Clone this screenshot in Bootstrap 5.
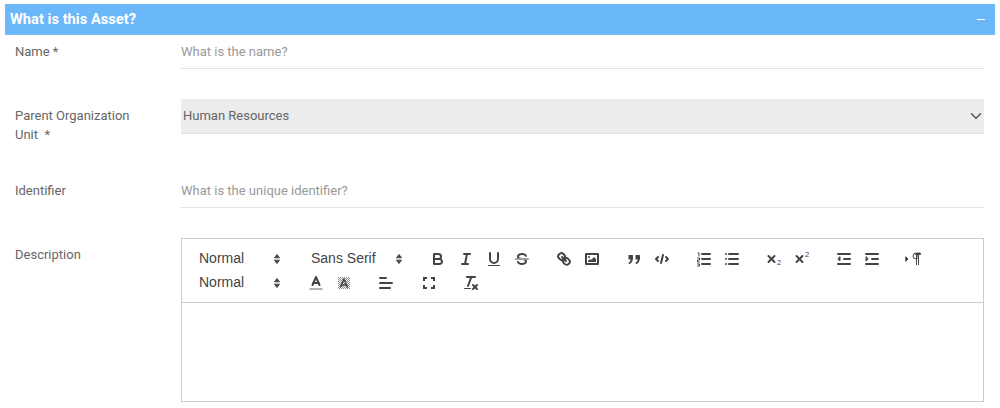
<!DOCTYPE html>
<html lang="en">
<head>
<meta charset="utf-8">
<title>What is this Asset?</title>
<link href="https://cdn.jsdelivr.net/npm/bootstrap@5.3.0/dist/css/bootstrap.min.css" rel="stylesheet">
<style>
body{font-family:Roboto,"Liberation Sans",sans-serif;font-size:13px;color:#666;background:#fff}
.asset-panel{margin:4px 5px 0}
.asset-head{height:31px;background:#6ab7fa;color:#fff;padding:0 10px 0 5px;border-bottom:1px solid #7cc0fb;font-size:14.7px;font-weight:700}
.asset-min{display:block;width:8px;height:1px;background:#fff}
.asset-body{padding:0 10px 0 10px}
.asset-row{margin-bottom:30px}
.asset-label{flex:0 0 166px;width:166px;padding:8px 30px 0 0;line-height:18.5px;font-size:13px;margin:0;color:#666}
.asset-input{border:0;border-bottom:1px solid #e3e3e3;border-radius:0;height:34px;padding:0;font-size:13px;color:#666;background:transparent;box-shadow:none;flex:0 0 803px;width:803px}
.asset-input::placeholder{color:#999;opacity:1}
.asset-select{border:0;border-bottom:1px solid #e3e3e3;border-radius:0;height:35px;padding:0 30px 0 2px;font-size:13px;color:#666;background-color:#ececec;background-position:right 0 center;background-size:16px 12px;flex:0 0 803px;width:803px;background-image:url("data:image/svg+xml,%3csvg xmlns='http://www.w3.org/2000/svg' viewBox='0 0 16 16'%3e%3cpath fill='none' stroke='%23555' stroke-linecap='round' stroke-linejoin='round' stroke-width='2' d='m2 5 6 6 6-6'/%3e%3c/svg%3e")}
.ed-box{border:1px solid #ccc;flex:0 0 803px;width:803px}
.ed-tools{border-bottom:1px solid #ccc;padding:8px;font-family:"Liberation Sans",sans-serif;font-size:14px;color:#444;height:64px}
.ed-group{display:inline-flex;margin-right:14px;height:24px;align-items:center}
.ed-pick{display:flex;align-items:center;justify-content:space-between;width:98px;height:24px;padding:0 2px 1px 9px}
.ed-pick.ed-wide{width:106px;padding:0 1px 1px 8px}
.ed-pick svg{margin-top:1px}
.ed-btn{display:flex;align-items:center;justify-content:center;width:28px;height:24px;padding:3px 5px}
.ed-btn svg,.ed-pick svg{width:18px;height:18px;flex:none}
.ed-btn svg *,.ed-pick svg *{fill:none;stroke:#444;stroke-width:2;stroke-linecap:round;stroke-linejoin:round}
.ed-btn svg .t,.ed-pick svg .t{stroke-width:1}
.ed-btn svg .f,.ed-pick svg .f{fill:#444;stroke:none}
.ed-btn svg .fs,.ed-pick svg .fs{fill:#444;stroke:#444;stroke-width:1}
.ed-btn svg text{fill:#444;stroke:none;font:7.5px "Liberation Sans",sans-serif}
.ed-area{height:98px}
.ed-m15{margin-right:15px}
</style>
</head>
<body>
<div class="asset-panel">
  <div class="asset-head d-flex align-items-center justify-content-between">
    <span>What is this Asset?</span><span class="asset-min"></span>
  </div>
  <form class="asset-body">
    <div class="asset-row d-flex">
      <label class="asset-label" for="fName">Name *</label>
      <input id="fName" class="form-control asset-input" placeholder="What is the name?">
    </div>
    <div class="asset-row d-flex">
      <label class="asset-label" for="fOrg">Parent Organization Unit &nbsp;*</label>
      <select id="fOrg" class="form-select asset-select"><option>Human Resources</option></select>
    </div>
    <div class="asset-row d-flex">
      <label class="asset-label" for="fId">Identifier</label>
      <input id="fId" class="form-control asset-input" placeholder="What is the unique identifier?">
    </div>
    <div class="d-flex">
      <label class="asset-label">Description</label>
      <div class="ed-box">
        <div class="ed-tools">
          <div class="d-flex">
            <span class="ed-group ed-m15"><span class="ed-pick">Normal<svg viewBox="0 0 18 18"><polygon class="fs" points="6.700 10.500 9 13.500 11.300 10.500"/><polygon class="fs" points="6.700 7.500 9 4.500 11.300 7.500"/></svg></span></span>
            <span class="ed-group ed-m15"><span class="ed-pick ed-wide">Sans Serif<svg viewBox="0 0 18 18"><polygon class="fs" points="6.700 10.500 9 13.500 11.300 10.500"/><polygon class="fs" points="6.700 7.500 9 4.500 11.300 7.500"/></svg></span></span>
            <span class="ed-group">
              <span class="ed-btn"><svg viewBox="0 0 18 18"><path d="M5,4H9.5A2.5,2.5,0,0,1,12,6.5v0A2.5,2.5,0,0,1,9.5,9H5V4Z"/><path d="M5,9h5.5A2.5,2.5,0,0,1,13,11.5v0A2.5,2.5,0,0,1,10.5,14H5V9Z"/></svg></span>
              <span class="ed-btn"><svg viewBox="0 0 18 18"><line x1="7" x2="13" y1="4" y2="4"/><line x1="5" x2="11" y1="14" y2="14"/><line x1="8" x2="10" y1="14" y2="4"/></svg></span>
              <span class="ed-btn"><svg viewBox="0 0 18 18"><path d="M5,3V9a4,4,0,0,0,4,4h0a4,4,0,0,0,4-4V3"/><rect class="f" x="3" y="15" width="12" height="1" rx=".5"/></svg></span>
              <span class="ed-btn"><svg viewBox="0 0 18 18"><line class="t" x1="15.5" x2="2.5" y1="9" y2="9"/><path class="f" d="M9,8C6.5,7.8,6,7.5,6,6.5,6,5.8,7.3,5,9,5c1.6,0,2.8.7,3,1.3a1,1,0,0,0,1.9-.6C13.4,4.1,11.4,3,9,3,6.2,3,4,4.5,4,6.500a3.2,3.2,0,0,0,.5,1.8Z"/><path class="f" d="M9,10C11.5,10.2,12,10.5,12,11.5c0,.7-1.3,1.5-3,1.5-1.6,0-2.8-.7-3-1.3a1,1,0,1,0-1.9.6C4.6,13.9,6.6,15,9,15c2.8,0,5-1.5,5-3.5a3.2,3.2,0,0,0-.5-1.8Z"/></svg></span>
            </span>
            <span class="ed-group">
              <span class="ed-btn"><svg viewBox="0 0 18 18"><line x1="7" x2="11" y1="7" y2="11"/><path d="M8.9,4.6a3.5,3.5,0,0,1,.4,4.7A3.5,3.5,0,0,1,4.6,8.9C3.2,7.5,2,6.4,4.2,4.2S7.5,3.2,8.9,4.6Z"/><path d="M13.4,9.1a3.5,3.5,0,0,0-4.7-.4,3.5,3.5,0,0,0,.4,4.7c1.4,1.4,2.5,2.5,4.7.4S14.8,10.5,13.4,9.1Z"/></svg></span>
              <span class="ed-btn"><svg viewBox="0 0 18 18"><rect x="3" y="4" width="12" height="10"/><circle class="f" cx="6" cy="7" r="1"/><polygon class="f" points="5 12 5 11 7 9 8 10 11 7 13 9 13 12"/></svg></span>
            </span>
            <span class="ed-group">
              <span class="ed-btn"><svg viewBox="0 0 18 18"><rect class="f" x="3.500" y="5" width="4.500" height="4.500" rx=".5"/><rect class="f" x="10.500" y="5" width="4.500" height="4.500" rx=".5"/><path d="M7,7c0,3-.7,5-2.500,6"/><path d="M14,7c0,3-.7,5-2.500,6"/></svg></span>
              <span class="ed-btn"><svg viewBox="0 0 18 18"><polyline points="5 7 3 9 5 11"/><polyline points="13 7 15 9 13 11"/><line x1="10" x2="8" y1="5" y2="13"/></svg></span>
            </span>
            <span class="ed-group">
              <span class="ed-btn"><svg viewBox="0 0 18 18"><line x1="7" x2="15" y1="4" y2="4"/><line x1="7" x2="15" y1="9" y2="9"/><line x1="7" x2="15" y1="14" y2="14"/><path class="t" d="M3 3h1v3M2.500 8h2v2h-2v2h2M2.500 14h2v2h-2"/></svg></span>
              <span class="ed-btn"><svg viewBox="0 0 18 18"><line x1="6" x2="15" y1="4" y2="4"/><line x1="6" x2="15" y1="9" y2="9"/><line x1="6" x2="15" y1="14" y2="14"/><line x1="3" x2="3" y1="4" y2="4"/><line x1="3" x2="3" y1="9" y2="9"/><line x1="3" x2="3" y1="14" y2="14"/></svg></span>
            </span>
            <span class="ed-group">
              <span class="ed-btn"><svg viewBox="0 0 18 18"><line x1="3.500" x2="9.500" y1="6" y2="12"/><line x1="9.500" x2="3.500" y1="6" y2="12"/><text x="12" y="15">2</text></svg></span>
              <span class="ed-btn"><svg viewBox="0 0 18 18"><line x1="3.500" x2="9.500" y1="6" y2="12"/><line x1="9.500" x2="3.500" y1="6" y2="12"/><text x="12" y="7">2</text></svg></span>
            </span>
            <span class="ed-group">
              <span class="ed-btn"><svg viewBox="0 0 18 18"><line x1="3" x2="15" y1="14" y2="14"/><line x1="3" x2="15" y1="4" y2="4"/><line x1="9" x2="15" y1="9" y2="9"/><polygon class="fs" points="5 7 5 11 3 9"/></svg></span>
              <span class="ed-btn"><svg viewBox="0 0 18 18"><line x1="3" x2="15" y1="14" y2="14"/><line x1="3" x2="15" y1="4" y2="4"/><line x1="9" x2="15" y1="9" y2="9"/><polygon class="fs" points="3 7 3 11 5 9"/></svg></span>
            </span>
            <span class="ed-group">
              <span class="ed-btn"><svg viewBox="0 0 18 18"><polygon class="fs" points="1 11 3 9 1 7"/><line x1="15" x2="11" y1="4" y2="4"/><path class="t" d="M11,3a3,3,0,0,0,0,6h1V3h3"/><rect class="f" x="11" y="4" width="1" height="11"/><rect class="f" x="13" y="4" width="1" height="11"/></svg></span>
            </span>
          </div>
          <div class="d-flex">
            <span class="ed-group"><span class="ed-pick">Normal<svg viewBox="0 0 18 18"><polygon class="fs" points="6.700 10.500 9 13.500 11.300 10.500"/><polygon class="fs" points="6.700 7.500 9 4.500 11.300 7.500"/></svg></span></span>
            <span class="ed-group">
              <span class="ed-btn"><svg viewBox="0 0 18 18"><line x1="3" x2="15" y1="15" y2="15" style="stroke:#999;stroke-width:1.500"/><polyline points="5.500 11 9 3 12.500 11"/><line x1="11.600" x2="6.400" y1="9" y2="9"/></svg></span>
              <span class="ed-btn"><svg viewBox="0 0 18 18"><defs><pattern id="ht" width="2" height="2" patternUnits="userSpaceOnUse"><rect width="1" height="1" style="fill:#888;stroke:none"/><rect x="1" y="1" width="1" height="1" style="fill:#888;stroke:none"/></pattern></defs><rect x="3" y="3" width="12" height="12" style="fill:url(#ht);stroke:none"/><polyline points="5.500 13 9 5 12.500 13" style="stroke-width:1.500"/><line x1="11.600" x2="6.400" y1="11" y2="11" style="stroke-width:1.500"/></svg></span>
            </span>
            <span class="ed-group ed-m15">
              <span class="ed-btn"><svg viewBox="0 0 18 18"><line x1="3" x2="15" y1="9" y2="9"/><line x1="3" x2="13" y1="14" y2="14"/><line x1="3" x2="9" y1="4" y2="4"/></svg></span>
            </span>
            <span class="ed-group">
              <span class="ed-btn"><svg viewBox="0 0 18 18"><path d="M4 7V4h3M11 4h3v3M14 11v3h-3M7 14H4v-3" style="stroke-linecap:butt;stroke-linejoin:miter"/></svg></span>
            </span>
            <span class="ed-group">
              <span class="ed-btn"><svg viewBox="0 0 18 18"><line x1="5" x2="13" y1="3" y2="3"/><line x1="6" x2="9.350" y1="12" y2="3"/><line x1="11" x2="15" y1="11" y2="15"/><line x1="15" x2="11" y1="11" y2="15"/><rect class="f" x="2" y="14" width="7" height="1" rx=".5"/></svg></span>
            </span>
          </div>
        </div>
        <div class="ed-area"></div>
      </div>
    </div>
  </form>
</div>
<script src="https://cdn.jsdelivr.net/npm/bootstrap@5.3.0/dist/js/bootstrap.bundle.min.js"></script>
</body>
</html>
